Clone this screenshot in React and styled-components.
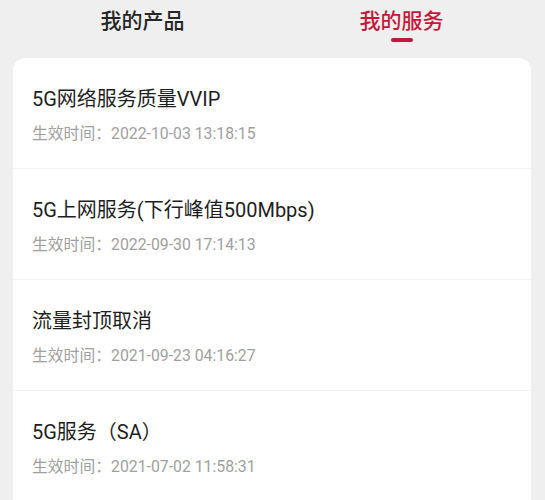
import React, { useState } from "react";
import styled, { createGlobalStyle } from "styled-components";

const GlobalStyle = createGlobalStyle`
  html, body {
    margin: 0;
    padding: 0;
    background: #efefef;
  }
  body {
    font-family: Roboto, "Noto Sans CJK SC", sans-serif;
    -webkit-font-smoothing: antialiased;
  }
`;

const Page = styled.div`
  width: 545px;
  height: 500px;
  overflow: hidden;
  background: #efefef;
`;

const TabBar = styled.div`
  display: flex;
  margin: 0 14px 0 13px;
  height: 58px;
`;

const Tab = styled.div`
  flex: 1;
  display: flex;
  flex-direction: column;
  align-items: center;
  padding-top: 6px;
  font-size: 21px;
  line-height: 30px;
  font-weight: 500;
  color: ${(props) => (props.active ? "#c4183a" : "#262626")};
  cursor: pointer;
`;

const Underline = styled.div`
  width: 22px;
  height: 4px;
  border-radius: 2px;
  margin-top: 2px;
  background: ${(props) => (props.active ? "#c4183a" : "transparent")};
`;

const Card = styled.div`
  margin: 0 14px 0 13px;
  background: #fff;
  border-radius: 12px 12px 0 0;
`;

const Row = styled.div`
  padding: 27px 19px 23px;
  border-bottom: 1px solid #f3f3f3;
`;

const RowTitle = styled.div`
  font-size: 20px;
  line-height: 28px;
  color: #1e1e1e;
`;

const RowTime = styled.div`
  margin-top: 10px;
  font-size: 15.8px;
  line-height: 22px;
  color: #a0a0a0;
`;

const services = [
  { name: "5G网络服务质量VVIP", time: "2022-10-03 13:18:15" },
  { name: "5G上网服务(下行峰值500Mbps)", time: "2022-09-30 17:14:13" },
  { name: "流量封顶取消", time: "2021-09-23 04:16:27" },
  { name: "5G服务（SA）", time: "2021-07-02 11:58:31" },
];

export default function App() {
  const [tab, setTab] = useState(1);
  const tabs = ["我的产品", "我的服务"];
  return (
    <Page>
      <GlobalStyle />
      <TabBar>
        {tabs.map((t, i) => (
          <Tab key={t} active={tab === i} onClick={() => setTab(i)}>
            {t}
            <Underline active={tab === i} />
          </Tab>
        ))}
      </TabBar>
      <Card>
        {services.map((s) => (
          <Row key={s.name}>
            <RowTitle>{s.name}</RowTitle>
            <RowTime>生效时间：{s.time}</RowTime>
          </Row>
        ))}
      </Card>
    </Page>
  );
}
